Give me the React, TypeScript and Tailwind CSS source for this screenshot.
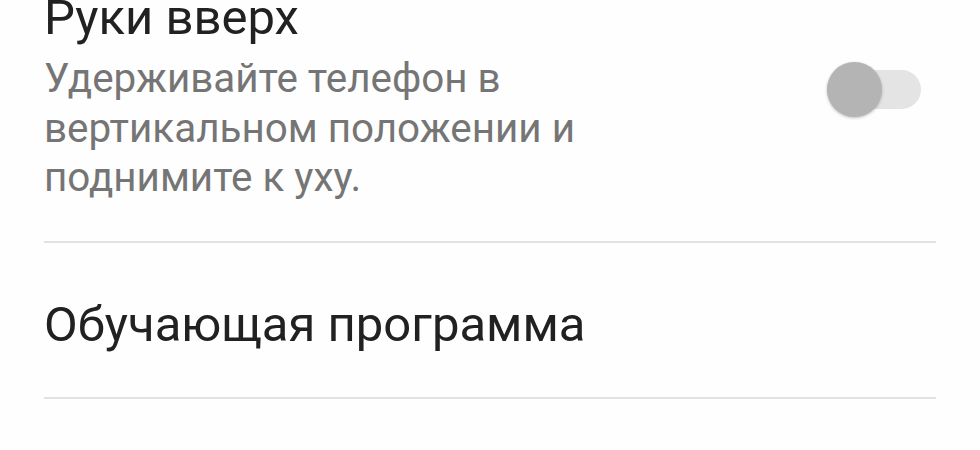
import React from 'react';

// Settings screen rows, Android-style
function Toggle({ on = false }: { on?: boolean }) {
    return (
        <div className="relative w-[94px] h-[55px] flex items-center">
            <div className="w-[94px] h-[39px] rounded-full bg-[#e4e4e4]" />
            <div
                className={`absolute top-0 w-[55px] h-[55px] rounded-full shadow-[0_1px_3px_rgba(0,0,0,0.25)] ${on ? 'right-0 bg-[#009688]' : 'left-0 bg-[#b4b4b4]'}`}
            />
        </div>
    );
}

export default function App() {
    return (
        <div
            className="w-[980px] h-[450px] overflow-hidden bg-[#fefefe] px-[44px]"
            style={{ fontFamily: 'Roboto, "Noto Sans", sans-serif' }}
        >
            {/* Raise to ear row */}
            <div className="flex items-start justify-between pb-[38px]">
                <div className="flex flex-col">
                    <h2 className="text-[49px] leading-[36px] text-[#212121]">Руки вверх</h2>
                    <p className="mt-[18px] text-[40.4px] leading-[49.5px] text-[#757575] w-[600px]">
                        Удерживайте телефон в<br />
                        вертикальном положении и<br />
                        поднимите к уху.
                    </p>
                </div>
                <div className="mt-[62px] mr-[15px]">
                    <Toggle />
                </div>
            </div>

            <div className="h-[2px] bg-[#e2e2e2]" />

            {/* Tutorial row */}
            <div className="pt-[54px] pb-[44px]">
                <h2 className="text-[49px] leading-[56px] text-[#212121]">Обучающая программа</h2>
            </div>

            <div className="h-[2px] bg-[#e2e2e2]" />
        </div>
    );
}
